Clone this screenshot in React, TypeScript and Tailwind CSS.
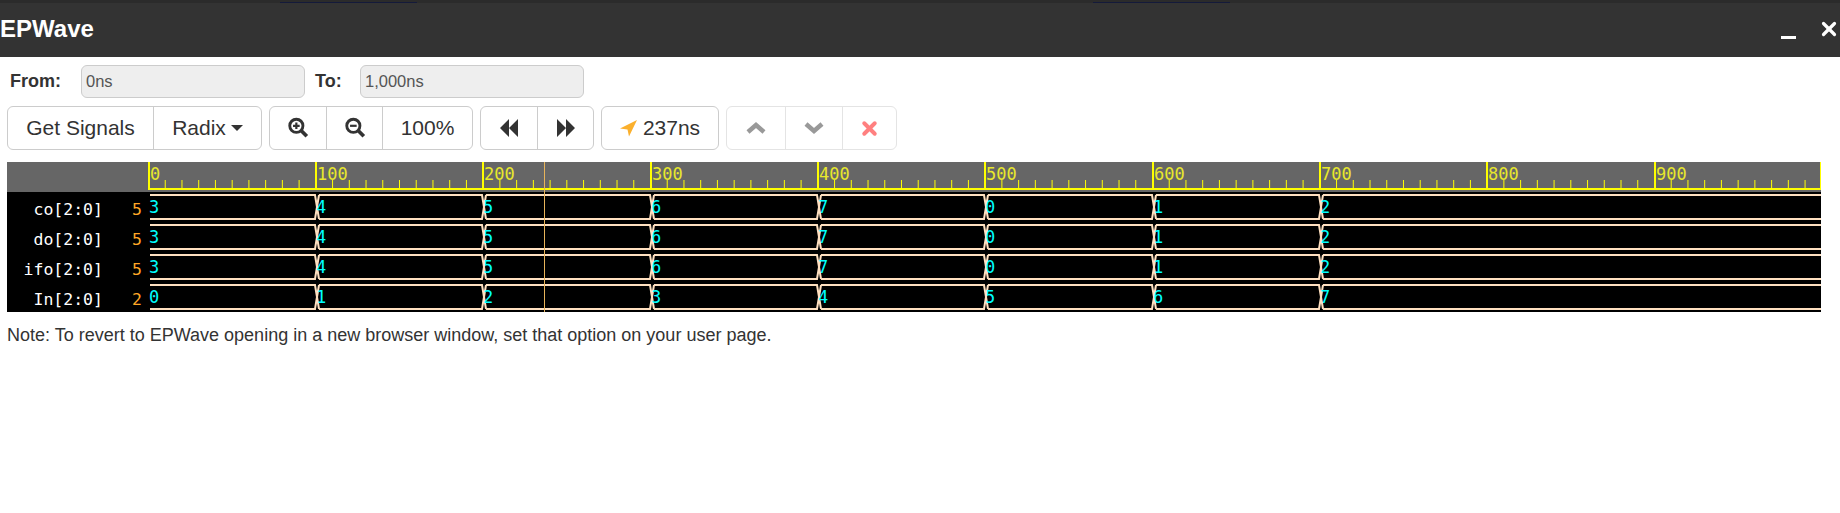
import { X } from 'lucide-react';

const sans = 'font-["Liberation_Sans",Arial,sans-serif]';

const TICK_LEFT = 148;
const NS_WIDTH = 1.6733;
const mono = "'DejaVu Sans Mono', monospace";

const signals = [
  { name: 'co[2:0]', current: '5', values: ['3', '4', '5', '6', '7', '0', '1', '2'] },
  { name: 'do[2:0]', current: '5', values: ['3', '4', '5', '6', '7', '0', '1', '2'] },
  { name: 'ifo[2:0]', current: '5', values: ['3', '4', '5', '6', '7', '0', '1', '2'] },
  { name: 'In[2:0]', current: '2', values: ['0', '1', '2', '3', '4', '5', '6', '7'] },
];

// major tick x for a time in ns
const tickX = (ns: number) => Math.round(TICK_LEFT + ns * NS_WIDTH - 0.3);

function MagnifierIcon({ plus }: { plus?: boolean }) {
  return (
    <svg width="22" height="22" viewBox="0 0 20 20" fill="none" stroke="#333" strokeWidth="2.6">
      <circle cx="8.5" cy="8" r="6" />
      <path d="M13 12.5l5 5" strokeWidth="3.4" />
      <path d={plus ? 'M5.5 8h6M8.5 5v6' : 'M5.5 8h6'} strokeWidth="2" />
    </svg>
  );
}

function SkipIcon({ flip }: { flip?: boolean }) {
  return (
    <svg width="20" height="18" viewBox="0 0 20 18" fill="#333" className={flip ? 'scale-x-[-1]' : ''}>
      <path d="M10 0v18L1 9zM19 0v18l-9-9z" />
    </svg>
  );
}

function Chevron({ down }: { down?: boolean }) {
  return (
    <svg width="20" height="14" viewBox="0 0 20 14" fill="none" stroke="#999" strokeWidth="4.5">
      <path d={down ? 'M2 3l8 7 8-7' : 'M2 11l8-7 8 7'} />
    </svg>
  );
}

function Waves() {
  const ticks = [];
  for (let i = 0; i < 100; i++) {
    if (i % 10 === 0) {
      const x = tickX(i * 10);
      ticks.push(<rect key={i} x={x} y={0} width={2} height={28} fill="#ffff00" />);
      ticks.push(
        <text key={`t${i}`} x={x + 2} y={18} fill="#e8e82c" fontSize={17} fontFamily={mono}>
          {i * 10}
        </text>,
      );
    } else {
      ticks.push(<rect key={i} x={TICK_LEFT + i * NS_WIDTH * 10} y={18} width={1} height={9} fill="#ffff00" />);
    }
  }

  return (
    <svg width={1814} height={150} viewBox="0 0 1814 150" className="block">
      <rect x={0} y={0} width={1814} height={30} fill="#666666" />
      <rect x={0} y={30} width={1814} height={120} fill="#000000" />
      <g transform="translate(-7,0)">
        <rect x={148} y={26} width={1673} height={2} fill="#ffff00" />
        {ticks}
        <rect x={1820} y={0} width={1} height={28} fill="#ffff00" />
        {signals.map((signal, row) => {
          const top = 33 + row * 30;
          const bottom = top + 24;
          const mid = top + 12;
          const edges = signal.values.map((_, n) => tickX(n * 100));
          return (
            <g key={signal.name}>
              <text x={103} y={mid + 8} textAnchor="end" fill="#ffffff" fontSize={16.5} fontFamily={mono}>
                {signal.name}
              </text>
              <text x={132} y={mid + 8} fill="#ffa726" fontSize={16.5} fontFamily={mono}>
                {signal.current}
              </text>
              {signal.values.map((value, n) => {
                const x = edges[n];
                const start = n === 0 ? 150 : x + 4;
                const last = n === edges.length - 1;
                const end = last ? 1821 : edges[n + 1];
                const path = last
                  ? `M${start} ${top}H${end}M${start} ${bottom}H${end}`
                  : `M${start} ${top}H${end}L${end + 2} ${mid}L${end} ${bottom}H${start}`;
                return (
                  <g key={n}>
                    <path d={path} fill="none" stroke="#ffe0c0" strokeWidth={2} />
                    {n > 0 && <path d={`M${x + 4} ${top}L${x + 2} ${mid}L${x + 4} ${bottom}`} fill="none" stroke="#ffe0c0" strokeWidth={2} />}
                    <text x={x + 1} y={mid + 6} fill="#00ffff" fontSize={17} fontFamily={mono}>
                      {value}
                    </text>
                  </g>
                );
              })}
            </g>
          );
        })}
        <rect x={544} y={0} width={1} height={150} fill="#e8b45a" />
      </g>
    </svg>
  );
}

export default function App() {
  return (
    <div className={`w-[1840px] h-[513px] bg-white text-[#333] overflow-hidden ${sans}`}>
      <div className="h-[57px] bg-[#333333] flex flex-col">
        <div className="h-[3px] bg-[#2b2b2b] flex">
          <div className="w-[280px]" />
          <div className="w-[137px] border-b border-[#141a3a]" />
          <div className="w-[676px]" />
          <div className="w-[137px] border-b border-[#141a3a]" />
        </div>
        <div className="flex-1 flex items-center justify-between">
          <span className="text-[24px] font-bold text-white leading-none mb-[3px]">EPWave</span>
          <div className="flex items-center">
            <div className="w-[15px] h-[3px] bg-white mt-[15px] mr-[22px]" />
            <X size={22} strokeWidth={3.5} color="#ffffff" className="mb-[2px]" />
          </div>
        </div>
      </div>

      <div className="flex items-center h-[33px] mt-[8px] pl-[10px] text-[18px] font-bold">
        <span className="w-[71px]">From:</span>
        <div className="w-[224px] h-[33px] rounded-md border border-[#ccc] bg-[#eeeeee] pl-[4px] flex items-center text-[16.5px] font-normal text-[#555]">0ns</div>
        <span className="ml-[10px] w-[45px]">To:</span>
        <div className="w-[224px] h-[33px] rounded-md border border-[#ccc] bg-[#eeeeee] pl-[4px] flex items-center text-[16.5px] font-normal text-[#555]">1,000ns</div>
      </div>

      <div className="flex h-[44px] mt-[8px] ml-[7px] gap-[7px] text-[21px]">
        <div className="flex border border-[#ccc] rounded-md">
          <div className="w-[145px] flex items-center justify-center">Get Signals</div>
          <div className="w-[108px] border-l border-[#ccc] flex items-center justify-center gap-[5px]">
            Radix
            <span className="w-0 h-0 border-x-[6px] border-x-transparent border-t-[6px] border-t-[#333]" />
          </div>
        </div>
        <div className="flex border border-[#ccc] rounded-md">
          <div className="w-[56px] flex items-center justify-center"><MagnifierIcon plus /></div>
          <div className="w-[56px] border-l border-[#ccc] flex items-center justify-center"><MagnifierIcon /></div>
          <div className="w-[90px] border-l border-[#ccc] flex items-center justify-center">100%</div>
        </div>
        <div className="flex border border-[#ccc] rounded-md">
          <div className="w-[56px] flex items-center justify-center"><SkipIcon /></div>
          <div className="w-[56px] border-l border-[#ccc] flex items-center justify-center"><SkipIcon flip /></div>
        </div>
        <div className="w-[118px] flex items-center justify-center gap-[5px] border border-[#ccc] rounded-md">
          <svg width="18" height="18" viewBox="0 0 18 18" fill="#fbb02d"><path d="M17 1L0 9.5l7.5 1L9 17.5z" /></svg>
          237ns
        </div>
        <div className="flex border border-[#e4e4e4] rounded-md">
          <div className="w-[58px] flex items-center justify-center"><Chevron /></div>
          <div className="w-[57px] border-l border-[#e4e4e4] flex items-center justify-center"><Chevron down /></div>
          <div className="w-[54px] border-l border-[#e4e4e4] flex items-center justify-center"><X size={21} strokeWidth={4.5} color="#ff8080" /></div>
        </div>
      </div>

      <div className="mt-[12px] ml-[7px] w-[1814px]">
        <Waves />
      </div>

      <p className="mt-[13px] ml-[7px] text-[18px] leading-[20px]">
        Note: To revert to EPWave opening in a new browser window, set that option on your user page.
      </p>
    </div>
  );
}
